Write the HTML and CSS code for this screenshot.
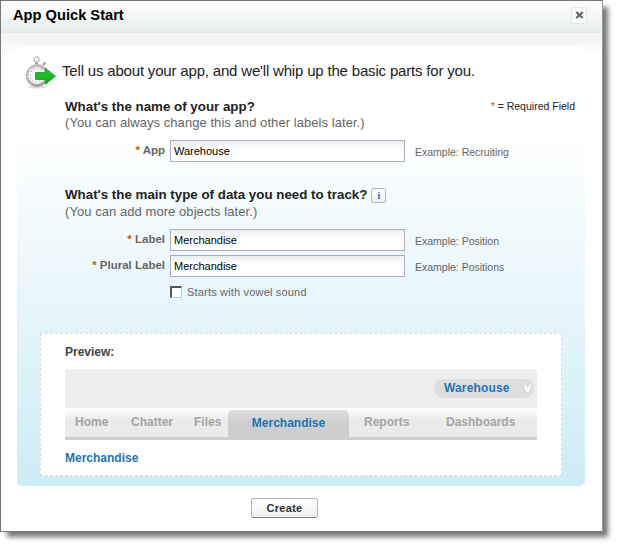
FILE: index.html
```html
<!DOCTYPE html>
<html lang="en">
<head>
<meta charset="utf-8">
<title>App Quick Start</title>
<link rel="stylesheet" href="styles.css">
</head>
<body>
<div class="dialog">
  <header class="header">
    <h1 class="title">App Quick Start</h1>
    <button class="close" aria-label="Close"><svg width="9" height="8" viewBox="0 0 9 8"><path d="M1.3 1 7.7 7M7.7 1 1.3 7" stroke="#666" stroke-width="2.3"/></svg></button>
  </header>
  <main class="body">
    <section class="panel">
      <div class="intro">
        <svg class="watch" width="32" height="34" viewBox="0 0 32 34">
          <defs>
            <linearGradient id="rim" x1="0" y1="0" x2="1" y2="1"><stop offset="0" stop-color="#ccc"/><stop offset="1" stop-color="#999"/></linearGradient>
            <linearGradient id="go" x1="0" y1="0" x2="0" y2="1"><stop offset="0" stop-color="#23b52f"/><stop offset=".5" stop-color="#18c12a"/><stop offset="1" stop-color="#0a9a19"/></linearGradient>
          </defs>
          <ellipse cx="12" cy="31" rx="10" ry="1.5" fill="#ddd"/>
          <circle cx="11.5" cy="3.5" r="2.6" fill="#f4f4f4" stroke="#c4c4c4" stroke-width="1.4"/>
          <path d="M10 6h3v4h-3z" fill="#aaa"/>
          <path d="m18 9 2.5-2.5" stroke="#aaa" stroke-width="2.5"/>
          <circle cx="12" cy="19.5" r="10" fill="#f7f7f5" stroke="url(#rim)" stroke-width="2.8"/>
          <circle cx="12" cy="19.5" r="6.8" fill="none" stroke="#aaa" stroke-width="1.2" stroke-dasharray="1 2.56"/>
          <path d="M10.5 16.5h10v-4.3l10 8-10 8v-4.7h-10z" fill="url(#go)" stroke="#159d22" stroke-width=".8"/>
        </svg>
        <p class="lead">Tell us about your app, and we'll whip up the basic parts for you.</p>
      </div>
      <div class="question">
        <div>
          <h2>What's the name of your app?</h2>
          <p class="hint">(You can always change this and other labels later.)</p>
        </div>
        <p class="required"><b>*</b> = Required Field</p>
      </div>
      <div class="field field-app">
        <label for="app"><b>*</b> App</label><input id="app" value="Warehouse"><span class="example">Example: Recruiting</span>
      </div>
      <div class="question second">
        <div>
          <h2>What's the main type of data you need to track?<i class="info">i</i></h2>
          <p class="hint">(You can add more objects later.)</p>
        </div>
      </div>
      <div class="field field-label">
        <label for="label"><b>*</b> Label</label><input id="label" value="Merchandise"><span class="example">Example: Position</span>
      </div>
      <div class="field field-plural">
        <label for="plural"><b>*</b> Plural Label</label><input id="plural" value="Merchandise"><span class="example">Example: Positions</span>
      </div>
      <label class="vowel"><input type="checkbox" class="check"><span>Starts with vowel sound</span></label>
      <div class="preview">
        <h3>Preview:</h3>
        <div class="app-bar"><div class="app-menu"><span>Warehouse</span><em>v</em></div></div>
        <nav class="tabs">
          <span class="tab home">Home</span><span class="tab chatter">Chatter</span><span class="tab files">Files</span><span class="tab active">Merchandise</span><span class="tab reports">Reports</span><span class="tab dashboards">Dashboards</span>
        </nav>
        <p class="object">Merchandise</p>
      </div>
    </section>
    <footer class="actions"><button class="create">Create</button></footer>
  </main>
</div>
</body>
</html>
```
FILE: styles.css
```css
* { box-sizing: border-box; }
body {
  margin: 0;
  height: 547px;
  overflow: hidden;
  background: #fff;
  font: 12px/14px "Liberation Sans", Arial, sans-serif;
  color: #222;
}
h1, h2, h3, p { margin: 0; white-space: nowrap; }
.dialog {
  width: 603px;
  height: 532px;
  border: 1px solid #777;
  border-right-color: #999;
  background: #fff;
  box-shadow: 6px 6px 5px -1px #777;
}
.header {
  height: 34px;
  display: flex;
  justify-content: space-between;
  padding: 5px 15px 0 12px;
  border-bottom: 1px solid #fff;
  background: linear-gradient(#fff, #e7ecec);
}
.title { font-size: 14.67px; line-height: 18px; color: #000; }
.close {
  width: 16px;
  height: 17px;
  margin-top: 1px;
  padding: 0 0 1px;
  display: flex;
  align-items: center;
  justify-content: center;
  border: 1px solid #e6e9e9;
  border-radius: 2px;
  background: #f9fafa;
}
.body {
  padding: 11px 17px 0 16px;
  background: linear-gradient(#f2f2f2, #fff 20px);
}
.panel {
  height: 440px;
  padding: 9px 0 0;
  border-radius: 5px;
  background: linear-gradient(#fff 0, #fff 88px, #e7f6fb 250px, #cdecf6 440px);
}
.intro { display: flex; height: 43px; padding-left: 8px; }
.watch { flex: none; margin-top: 1px; }
.lead { margin: 7px 0 0 5px; font-size: 15px; line-height: 18px; letter-spacing: -.18px; }
.question { display: flex; justify-content: space-between; padding: 0 10px 0 48px; }
h2 { display: flex; height: 16px; font-size: 13.33px; line-height: 17px; }
.hint { font-size: 13px; line-height: 18px; letter-spacing: .06px; color: #666; }
.required { margin-top: 2px; font-size: 10.5px; line-height: 12px; }
b { color: #c50; }
.required b { font-weight: 400; }
.field { display: flex; height: 22px; }
.field-app { margin-top: 8px; }
.field label { width: 148px; margin-right: 5px; padding-top: 4px; text-align: right; font-size: 11.5px; line-height: 13px; font-weight: 700; color: #666; }
.field input {
  width: 235px;
  height: 22px;
  padding: 0 3px;
  border: 1px solid #aaadc4;
  border-radius: 0;
  background: linear-gradient(#eceeee, #fff 8px);
  font: 11px "Liberation Sans", Arial, sans-serif;
  color: #000;
}
.example { margin: 6px 0 0 10px; font-size: 10.5px; line-height: 13px; color: #666; white-space: nowrap; }
.second { margin-top: 25px; }
.second h2 { line-height: 15px; }
.info {
  width: 15px;
  height: 15px;
  margin: 1px 0 0 4px;
  border: 1px solid #b5b9bd;
  border-radius: 2px;
  background: linear-gradient(#fff, #e8eef2);
  font: 700 10px/13px "Liberation Serif", serif;
  text-align: center;
  color: #1b70c4;
}
.field-label { margin-top: 8px; }
.field-plural { margin-top: 4px; }
.vowel { display: flex; height: 14px; margin: 9px 0 0 153px; font-size: 11px; line-height: 13px; color: #666; }
.vowel span { letter-spacing: .18px; }
.check {
  appearance: none;
  width: 12px;
  height: 12px;
  margin: 0 5px 0 0;
  border: 2px solid;
  border-width: 2px 1px 1px 2px;
  border-color: #555 #d4d0c8 #d4d0c8 #555;
  background: #fff;
}
.preview {
  width: 522px;
  height: 143px;
  margin: 33px 0 0 23px;
  padding: 11px 24px 0;
  border: 1px dashed #d7dcde;
  background: #fff;
}
h3 { font-size: 12px; line-height: 14px; color: #444; }
.app-bar {
  width: 472px;
  height: 39px;
  margin-top: 10px;
  padding: 10px 3px 0 0;
  display: flex;
  justify-content: flex-end;
  border-radius: 4px 4px 0 0;
  background: #ededed;
}
.app-menu {
  display: flex;
  justify-content: space-between;
  width: 100px;
  height: 19px;
  padding: 0 3px 0 10px;
  border-radius: 10px;
  background: #dedede;
  font-weight: 700;
  line-height: 19px;
  letter-spacing: .15px;
  color: #1976b5;
}
.app-menu em { font-style: normal; color: #fff; }
.tabs {
  display: flex;
  align-items: flex-end;
  width: 472px;
  height: 32px;
  border-bottom: 3px solid #cecece;
  background: linear-gradient(#fff, #ebebeb 12px);
  font-weight: 700;
  color: #a5a5a5;
}
.tab { height: 29px; line-height: 29px; white-space: nowrap; }
.home { width: 66px; padding-left: 10px; }
.chatter { width: 63px; }
.files { width: 34px; }
.home, .chatter, .files, .reports, .dashboards { flex: none; }
.active {
  flex: none;
  width: 121px;
  height: 27px;
  line-height: 27px;
  text-align: center;
  border-radius: 5px 5px 0 0;
  background: linear-gradient(#dedede, #cecece 14px);
  color: #1976b5;
}
.reports { width: 97px; padding-left: 15px; }
.object { margin-top: 11px; font-weight: 700; line-height: 14px; color: #1976b5; }
.actions { display: flex; height: 45px; padding: 12px 0 0 234px; }
.create {
  width: 67px;
  height: 20px;
  padding: 0;
  border: 1px solid #b5b5b5;
  border-bottom-color: #7f7f7f;
  border-radius: 3px;
  background: linear-gradient(#fff, #f0f0f0);
  font: 700 11px "Liberation Sans", Arial, sans-serif;
  letter-spacing: .3px;
  color: #333;
}
```
